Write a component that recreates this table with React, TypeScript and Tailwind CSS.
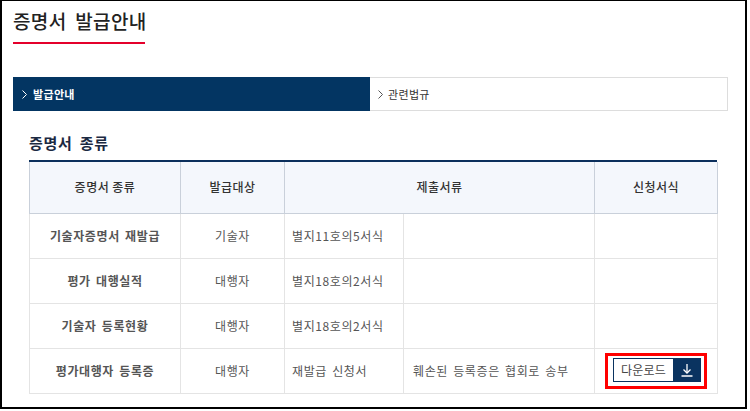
import React from 'react';

const font = { fontFamily: '"Noto Sans CJK KR", "Noto Sans", sans-serif' };

interface Row {
  name: string;
  target: string;
  doc: string;
  note: string;
  download: boolean;
}

const rows: Row[] = [
  { name: '기술자증명서 재발급', target: '기술자', doc: '별지11호의5서식', note: '', download: false },
  { name: '평가 대행실적', target: '대행자', doc: '별지18호의2서식', note: '', download: false },
  { name: '기술자 등록현황', target: '대행자', doc: '별지18호의2서식', note: '', download: false },
  { name: '평가대행자 등록증', target: '대행자', doc: '재발급 신청서', note: '훼손된 등록증은 협회로 송부', download: true },
];

function Chevron({ color }: { color: string }) {
  return (
    <svg width="5" height="9" viewBox="0 0 5 9" fill="none" className="shrink-0">
      <polyline points="0.5,0.5 4.5,4.5 0.5,8.5" stroke={color} strokeWidth="1" />
    </svg>
  );
}

function DownloadButton() {
  return (
    <div className="inline-flex border-[3px] border-[#ff0000] pl-[5px] pr-[3px] pt-[2px] pb-[4px]">
      <div className="flex h-[24px] border border-[#0a3360]">
        <span className="flex w-[59px] items-center justify-center bg-white text-[12px] tracking-[0.02em] text-[#444]">
          다운로드
        </span>
        <span className="flex w-[27px] items-center justify-center bg-[#0a3360]">
          <svg width="14" height="14" viewBox="0 0 14 14" fill="none">
            <line x1="7" y1="1" x2="7" y2="10" stroke="white" strokeWidth="1.3" />
            <polyline points="3.5,6.5 7,10 10.5,6.5" stroke="white" strokeWidth="1.3" fill="none" />
            <line x1="1.5" y1="13" x2="12.5" y2="13" stroke="white" strokeWidth="1.5" />
          </svg>
        </span>
      </div>
    </div>
  );
}

export default function App() {
  const th = 'border border-[#c9d0da] bg-[#f4f7fc] text-[12px] font-medium text-[#333] text-center tracking-[0.04em]';
  const td = 'border border-[#e4e4e4] text-[12px] text-[#555] tracking-[0.05em] [word-spacing:2px]';
  return (
    <div style={font} className="h-[409px] w-[747px] border-x-2 border-t border-b-2 border-black bg-white">
      <div className="pl-[11px]">
        <h1 className="mt-[7px] text-[19px] leading-[26px] font-medium text-[#222] tracking-[0.02em] [word-spacing:4px]">
          증명서 발급안내
        </h1>
        <div className="mt-[8px] h-[2px] w-[132px] bg-[#e4002b]" />

        <div className="mt-[33px] flex h-[34px] w-[715px]">
          <div className="flex w-[357px] items-center gap-[6px] bg-[#033562] pl-[9px] text-[11px] font-bold text-white tracking-[0.03em]">
            <Chevron color="#ffffff" />
            <span>발급안내</span>
          </div>
          <div className="flex flex-1 items-center gap-[5px] border border-l-0 border-[#dddddd] pl-[8px] text-[11px] text-[#333] tracking-[0.03em]">
            <Chevron color="#555555" />
            <span>관련법규</span>
          </div>
        </div>

        <h2 className="ml-[16px] mt-[22px] text-[15px] leading-[20px] font-bold text-[#1b2942] tracking-[0.05em] [word-spacing:3px]">
          증명서 종류
        </h2>

        <div className="ml-[16px] mt-[7px] w-[688px] border-t-2 border-[#0b2f5c]">
          <table className="w-full table-fixed border-collapse">
            <colgroup>
              <col className="w-[151px]" />
              <col className="w-[104px]" />
              <col className="w-[119px]" />
              <col className="w-[191px]" />
              <col className="w-[123px]" />
            </colgroup>
            <thead>
              <tr className="h-[51px]">
                <th className={`${th} border-t-0`}>증명서 종류</th>
                <th className={`${th} border-t-0`}>발급대상</th>
                <th className={`${th} border-t-0`} colSpan={2}>
                  제출서류
                </th>
                <th className={`${th} border-t-0`}>신청서식</th>
              </tr>
            </thead>
            <tbody>
              {rows.map((r) => (
                <tr key={r.name} className="h-[45px]">
                  <td className={`${td} text-center font-bold text-[#333]`}>{r.name}</td>
                  <td className={`${td} text-center`}>{r.target}</td>
                  <td className={`${td} pl-[7px]`}>{r.doc}</td>
                  <td className={`${td} pl-[9px]`}>{r.note}</td>
                  <td className={`${td} text-center`}>{r.download && <DownloadButton />}</td>
                </tr>
              ))}
            </tbody>
          </table>
        </div>
      </div>
    </div>
  );
}
